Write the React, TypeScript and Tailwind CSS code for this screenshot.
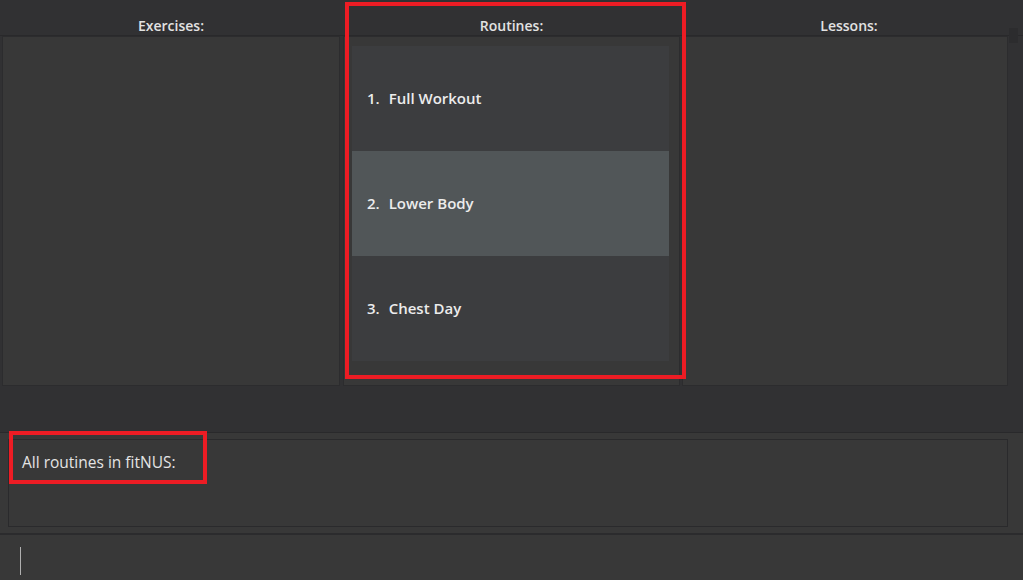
const routines = ["Full Workout", "Lower Body", "Chest Day"];

function Header({ title, className }: { title: string; className: string }) {
  return (
    <div className={`${className} flex items-end justify-center text-[14px] font-semibold text-[#e2e2e2]`}>
      <span className="translate-y-[1px]">{title}</span>
    </div>
  );
}

export default function App() {
  return (
    <div
      className="relative h-[580px] w-[1023px] overflow-hidden bg-[#313133]"
      style={{ fontFamily: '"Open Sans", "Noto Sans", sans-serif' }}
    >
      {/* column titles */}
      <div className="flex h-[36px] border-b border-[#29292b] pl-[2px] pr-[7px]">
        <Header title="Exercises:" className="w-[338px]" />
        <div className="w-[3px]" />
        <Header title="Routines:" className="w-[337px]" />
        <div className="w-[2px]" />
        <Header title="Lessons:" className="flex-1" />
      </div>

      {/* list panels */}
      <div className="flex h-[350px] pl-[2px] pr-[3px]">
        <div className="w-[338px] border border-[#2c2c2e] bg-[#383838]" />
        <div className="w-[3px]" />
        <div className="w-[337px] border border-[#2c2c2e] bg-[#383838] pl-[8px] pr-[10px] pt-[9px]">
          {routines.map((name, i) => (
            <div
              key={name}
              className={`flex h-[105px] items-center pl-[15px] text-[15px] font-semibold text-[#ececec] ${
                i === 1 ? "bg-[#515658]" : "bg-[#3c3d3f]"
              }`}
            >
              <span>{i + 1}.</span>
              <span className="ml-[9px]">{name}</span>
            </div>
          ))}
        </div>
        <div className="w-[2px]" />
        <div className="flex-1 border border-[#2c2c2e] bg-[#383838]" />
        <div className="flex w-[12px] flex-col">
          <div className="ml-[1px] mt-[-8px] h-[15px] w-[9px] bg-[#2c2c2e]" />
        </div>
      </div>

      {/* gap area */}
      <div className="h-[46px]" />

      {/* result display */}
      <div className="h-[101px] border-t border-[#29292b] bg-[#383838] pl-[8px] pr-[15px] pt-[6px]">
        <div className="h-[88px] border border-[#2a2a2c] bg-[#383838] pl-[13px] pt-[11px] text-[15.5px] text-[#e4e4e4]">
          All routines in fitNUS:
        </div>
      </div>

      {/* command box */}
      <div className="h-[48px] border-t-2 border-[#2b2b2d] bg-[#383838] pl-[20px] pt-[12px]">
        <div className="h-[28px] w-[1px] bg-[#b0b0b0]" />
      </div>

      {/* annotation boxes */}
      <div className="pointer-events-none absolute left-[345px] top-[2px] h-[377px] w-[341px] border-4 border-[#ed1c24]" />
      <div className="pointer-events-none absolute left-[9px] top-[431px] h-[53px] w-[198px] border-4 border-[#ed1c24]" />
    </div>
  );
}
